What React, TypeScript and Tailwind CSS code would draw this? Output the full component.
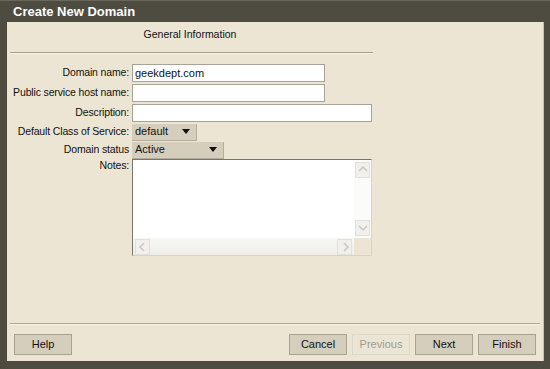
import React from "react";

const font = { fontFamily: '"Liberation Sans", Arial, sans-serif' };

const Caret = () => (
  <svg width="8" height="5" viewBox="0 0 8 5" className="shrink-0">
    <path d="M0 0h8L4 5z" fill="#111" />
  </svg>
);

const Btn = ({ label, disabled = false }: { label: string; disabled?: boolean }) => (
  <div
    className={`w-[58px] h-[21px] flex items-center justify-center text-[11px] border ${
      disabled ? "border-[#ddd7c7] bg-[#ebe5d5] text-[#a09b8e]" : "border-[#a9a290] bg-[#d5cebd] text-[#111]"
    }`}
  >
    {label}
  </div>
);

const Label = ({ text, h }: { text: string; h: string }) => (
  <div className={`${h} w-[122px] flex items-center justify-end text-[10.5px] tracking-[-0.15px] text-[#111] whitespace-nowrap`}>
    {text}
  </div>
);

const Arrow = ({ dir }: { dir: "up" | "down" | "left" | "right" }) => {
  const d = {
    up: "M2 7l4-4 4 4",
    down: "M2 4l4 4 4-4",
    left: "M7 2L3 6l4 4",
    right: "M5 2l4 4-4 4",
  }[dir];
  return (
    <div className="w-[15px] h-[16px] flex items-center justify-center bg-[#f1f0ec] border border-[#e3e0d8]">
      <svg width="12" height="12" viewBox="0 0 12 12">
        <path d={d} stroke="#c9c6be" strokeWidth="1.5" fill="none" />
      </svg>
    </div>
  );
};

export default function App() {
  return (
    <div className="w-[550px] h-[369px] bg-[#4e4c40] flex flex-col" style={font}>
      <div className="h-[22px] flex items-center pl-[13px] text-white font-bold text-[13px] border-t border-[#6a685c]">
        Create New Domain
      </div>
      <div className="flex-1 ml-[7px] mr-[6px] mb-[8px] bg-[#ece5d3] border-r border-[#c9c2b1] flex flex-col">
        <div className="w-[366px] text-center text-[10.5px] text-[#111] pt-[6px] leading-[13px]">General Information</div>
        <div className="ml-[3px] w-[363px] mt-[11px] border-t border-[#a49c88] border-b border-b-[#f7f3ea]" />
        <div className="mt-[9px] flex flex-col">
          <div className="flex items-center h-[20px]">
            <Label text="Domain name:" h="h-[20px]" />
            <div className="ml-[3px] w-[193px] h-[18px] bg-white border border-[#a7a293] flex items-center px-[2px] text-[11px] text-[#111]">
              geekdept.com
            </div>
          </div>
          <div className="flex items-center h-[20px]">
            <Label text="Public service host name:" h="h-[20px]" />
            <div className="ml-[3px] w-[193px] h-[18px] bg-white border border-[#a7a293]" />
          </div>
          <div className="flex items-center h-[20px]">
            <Label text="Description:" h="h-[20px]" />
            <div className="ml-[3px] w-[240px] h-[18px] bg-white border border-[#a7a293]" />
          </div>
          <div className="flex items-center h-[18px]">
            <Label text="Default Class of Service:" h="h-[18px]" />
            <div className="ml-[3px] w-[65px] h-[17px] bg-[#d5cebd] border-r border-b border-[#b4ad9b] flex items-center justify-between pl-[3px] pr-[6px] text-[11px] text-[#111]">
              default
              <Caret />
            </div>
          </div>
          <div className="flex items-center h-[18px]">
            <Label text="Domain status" h="h-[18px]" />
            <div className="ml-[3px] w-[92px] h-[17px] bg-[#d5cebd] border-r border-b border-[#b4ad9b] flex items-center justify-between pl-[3px] pr-[6px] text-[11px] text-[#111]">
              Active
              <Caret />
            </div>
          </div>
          <div className="flex items-start">
            <Label text="Notes:" h="h-[13px]" />
            <div className="ml-[3px] w-[240px] h-[97px] bg-white border border-[#77746a] border-r-[#d8d3c6] border-b-[#d8d3c6] flex flex-col">
              <div className="flex-1 flex">
                <div className="flex-1" />
                <div className="w-[17px] flex flex-col justify-between items-center py-[2px] bg-[#fbfbfa]">
                  <Arrow dir="up" />
                  <Arrow dir="down" />
                </div>
              </div>
              <div className="h-[17px] flex">
                <div className="flex-1 flex items-center justify-between px-[2px] bg-gradient-to-b from-[#f7f7f5] to-[#eeeeea]">
                  <Arrow dir="left" />
                  <Arrow dir="right" />
                </div>
                <div className="w-[17px] bg-[#ece5d3]" />
              </div>
            </div>
          </div>
        </div>
        <div className="flex-1" />
        <div className="mx-[3px] border-t border-[#aea78f] border-b border-b-[#f7f3ea]" />
        <div className="mt-[9px] mb-[6px] flex items-center pl-[7px] pr-[7px]">
          <Btn label="Help" />
          <div className="flex-1" />
          <div className="flex gap-[5px]">
            <Btn label="Cancel" />
            <Btn label="Previous" disabled />
            <Btn label="Next" />
            <Btn label="Finish" />
          </div>
        </div>
      </div>
    </div>
  );
}
